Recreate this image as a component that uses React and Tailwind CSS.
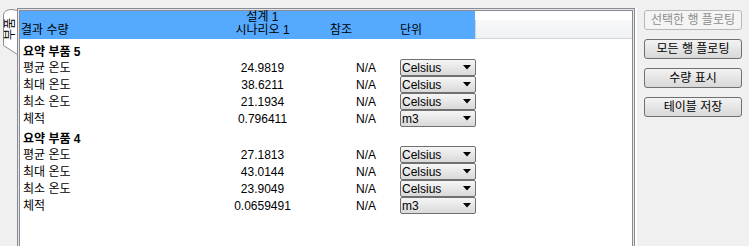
const groups = [
  {
    name: "요약 부품 5",
    rows: [
      { label: "평균 온도", value: "24.9819", unit: "Celsius" },
      { label: "최대 온도", value: "38.6211", unit: "Celsius" },
      { label: "최소 온도", value: "21.1934", unit: "Celsius" },
      { label: "체적", value: "0.796411", unit: "m3" },
    ],
  },
  {
    name: "요약 부품 4",
    rows: [
      { label: "평균 온도", value: "27.1813", unit: "Celsius" },
      { label: "최대 온도", value: "43.0144", unit: "Celsius" },
      { label: "최소 온도", value: "23.9049", unit: "Celsius" },
      { label: "체적", value: "0.0659491", unit: "m3" },
    ],
  },
];

const buttons = [
  { label: "선택한 행 플로팅", disabled: true },
  { label: "모든 행 플로팅" },
  { label: "수량 표시" },
  { label: "테이블 저장" },
];

function UnitSelect({ unit }) {
  return (
    <div className="w-[76px] h-[17px] flex items-center justify-between border border-[#707070] rounded-[2px] bg-linear-to-b from-[#f6f6f6] to-[#d9d9d9] pl-px pr-[4px]">
      <span className="text-[12px] leading-none text-black">{unit}</span>
      {/* small down triangle */}
      <svg width="8" height="5" viewBox="0 0 8 5">
        <path d="M0 0 H8 L4 4.5 Z" fill="#000" />
      </svg>
    </div>
  );
}

export default function App() {
  return (
    <div className="w-[749px] h-[246px] overflow-hidden bg-[#f0f0f0] flex font-['Liberation_Sans','Noto_Sans_CJK_KR',sans-serif] text-[12px] text-black">
      {/* ── Left side tab ─────────────────────────────── */}
      <div className="w-[17px] shrink-0 relative">
        <svg width="17" height="60" viewBox="0 0 17 60" className="absolute left-0 top-0">
          <path
            d="M17.5 10.5 L12 9.5 Q4 9.5 3.5 15 L3.5 45.5 L17.5 54.5 Z"
            fill="#ffffff"
            stroke="#8c8c8c"
            strokeWidth="1"
          />
        </svg>
        <div className="absolute left-[4px] top-[16px] h-[26px] w-[13px] flex items-center justify-center">
          <span className="[writing-mode:vertical-rl] [text-orientation:sideways] rotate-180 leading-[13px] text-[12px]">
            부품
          </span>
        </div>
      </div>

      {/* ── Table frame ───────────────────────────────── */}
      <div className="w-[620px] shrink-0 mt-[8px] h-[260px] border-r-2 border-white">
        <div className="w-[618px] h-full border border-[#898c95] bg-[#e4e4e4] p-px">
          <div className="h-full border border-[#898c95] bg-white flex flex-col">
            {/* header */}
            <div className="flex h-[28px] shrink-0">
              <div className="w-[455px] bg-[#55aaff] flex items-end pb-[2px] leading-[13px]">
                <div className="w-[180px] pl-px">결과 수량</div>
                <div className="w-[125px] text-center">
                  <div>설계 1</div>
                  <div>시나리오 1</div>
                </div>
                <div className="w-[55px] pl-[5px]">참조</div>
                <div className="pl-[20px]">단위</div>
              </div>
              <div className="flex-1 flex flex-col">
                <div className="h-[9px]" />
                <div className="flex-1 border-l border-b border-[#d5d5d5] bg-linear-to-b from-[#f7f8f9] to-[#f0f1f3]" />
              </div>
            </div>

            {/* body */}
            <div className="pt-px">
              {groups.map((g) => (
                <div key={g.name} className="pt-[5px]">
                  <div className="h-[14px] flex items-center pl-[3px] font-bold leading-none">
                    {g.name}
                  </div>
                  {g.rows.map((r, i) => (
                    <div key={i} className="h-[17px] flex items-center">
                      <div className="w-[180px] pl-[3px]">{r.label}</div>
                      <div className="w-[125px] text-center">{r.value}</div>
                      <div className="w-[55px] text-right pr-[4px]">N/A</div>
                      <div className="pl-[20px]">
                        <UnitSelect unit={r.unit} />
                      </div>
                    </div>
                  ))}
                </div>
              ))}
            </div>
          </div>
        </div>
      </div>

      {/* ── Buttons ───────────────────────────────────── */}
      <div className="ml-[7px] pt-[10px] flex flex-col gap-[9px]">
        {buttons.map((b) =>
          b.disabled ? (
            <div
              key={b.label}
              className="w-[98px] h-[20px] flex items-center justify-center rounded-[3px] border border-[#b5b8bc] bg-[#f4f4f4] text-[#8d8d8d]"
            >
              {b.label}
            </div>
          ) : (
            <button
              key={b.label}
              className="w-[98px] h-[20px] flex items-center justify-center rounded-[3px] border border-[#707070] bg-linear-to-b from-[#f3f3f3] to-[#d8d8d8] text-black"
            >
              {b.label}
            </button>
          )
        )}
      </div>
    </div>
  );
}
